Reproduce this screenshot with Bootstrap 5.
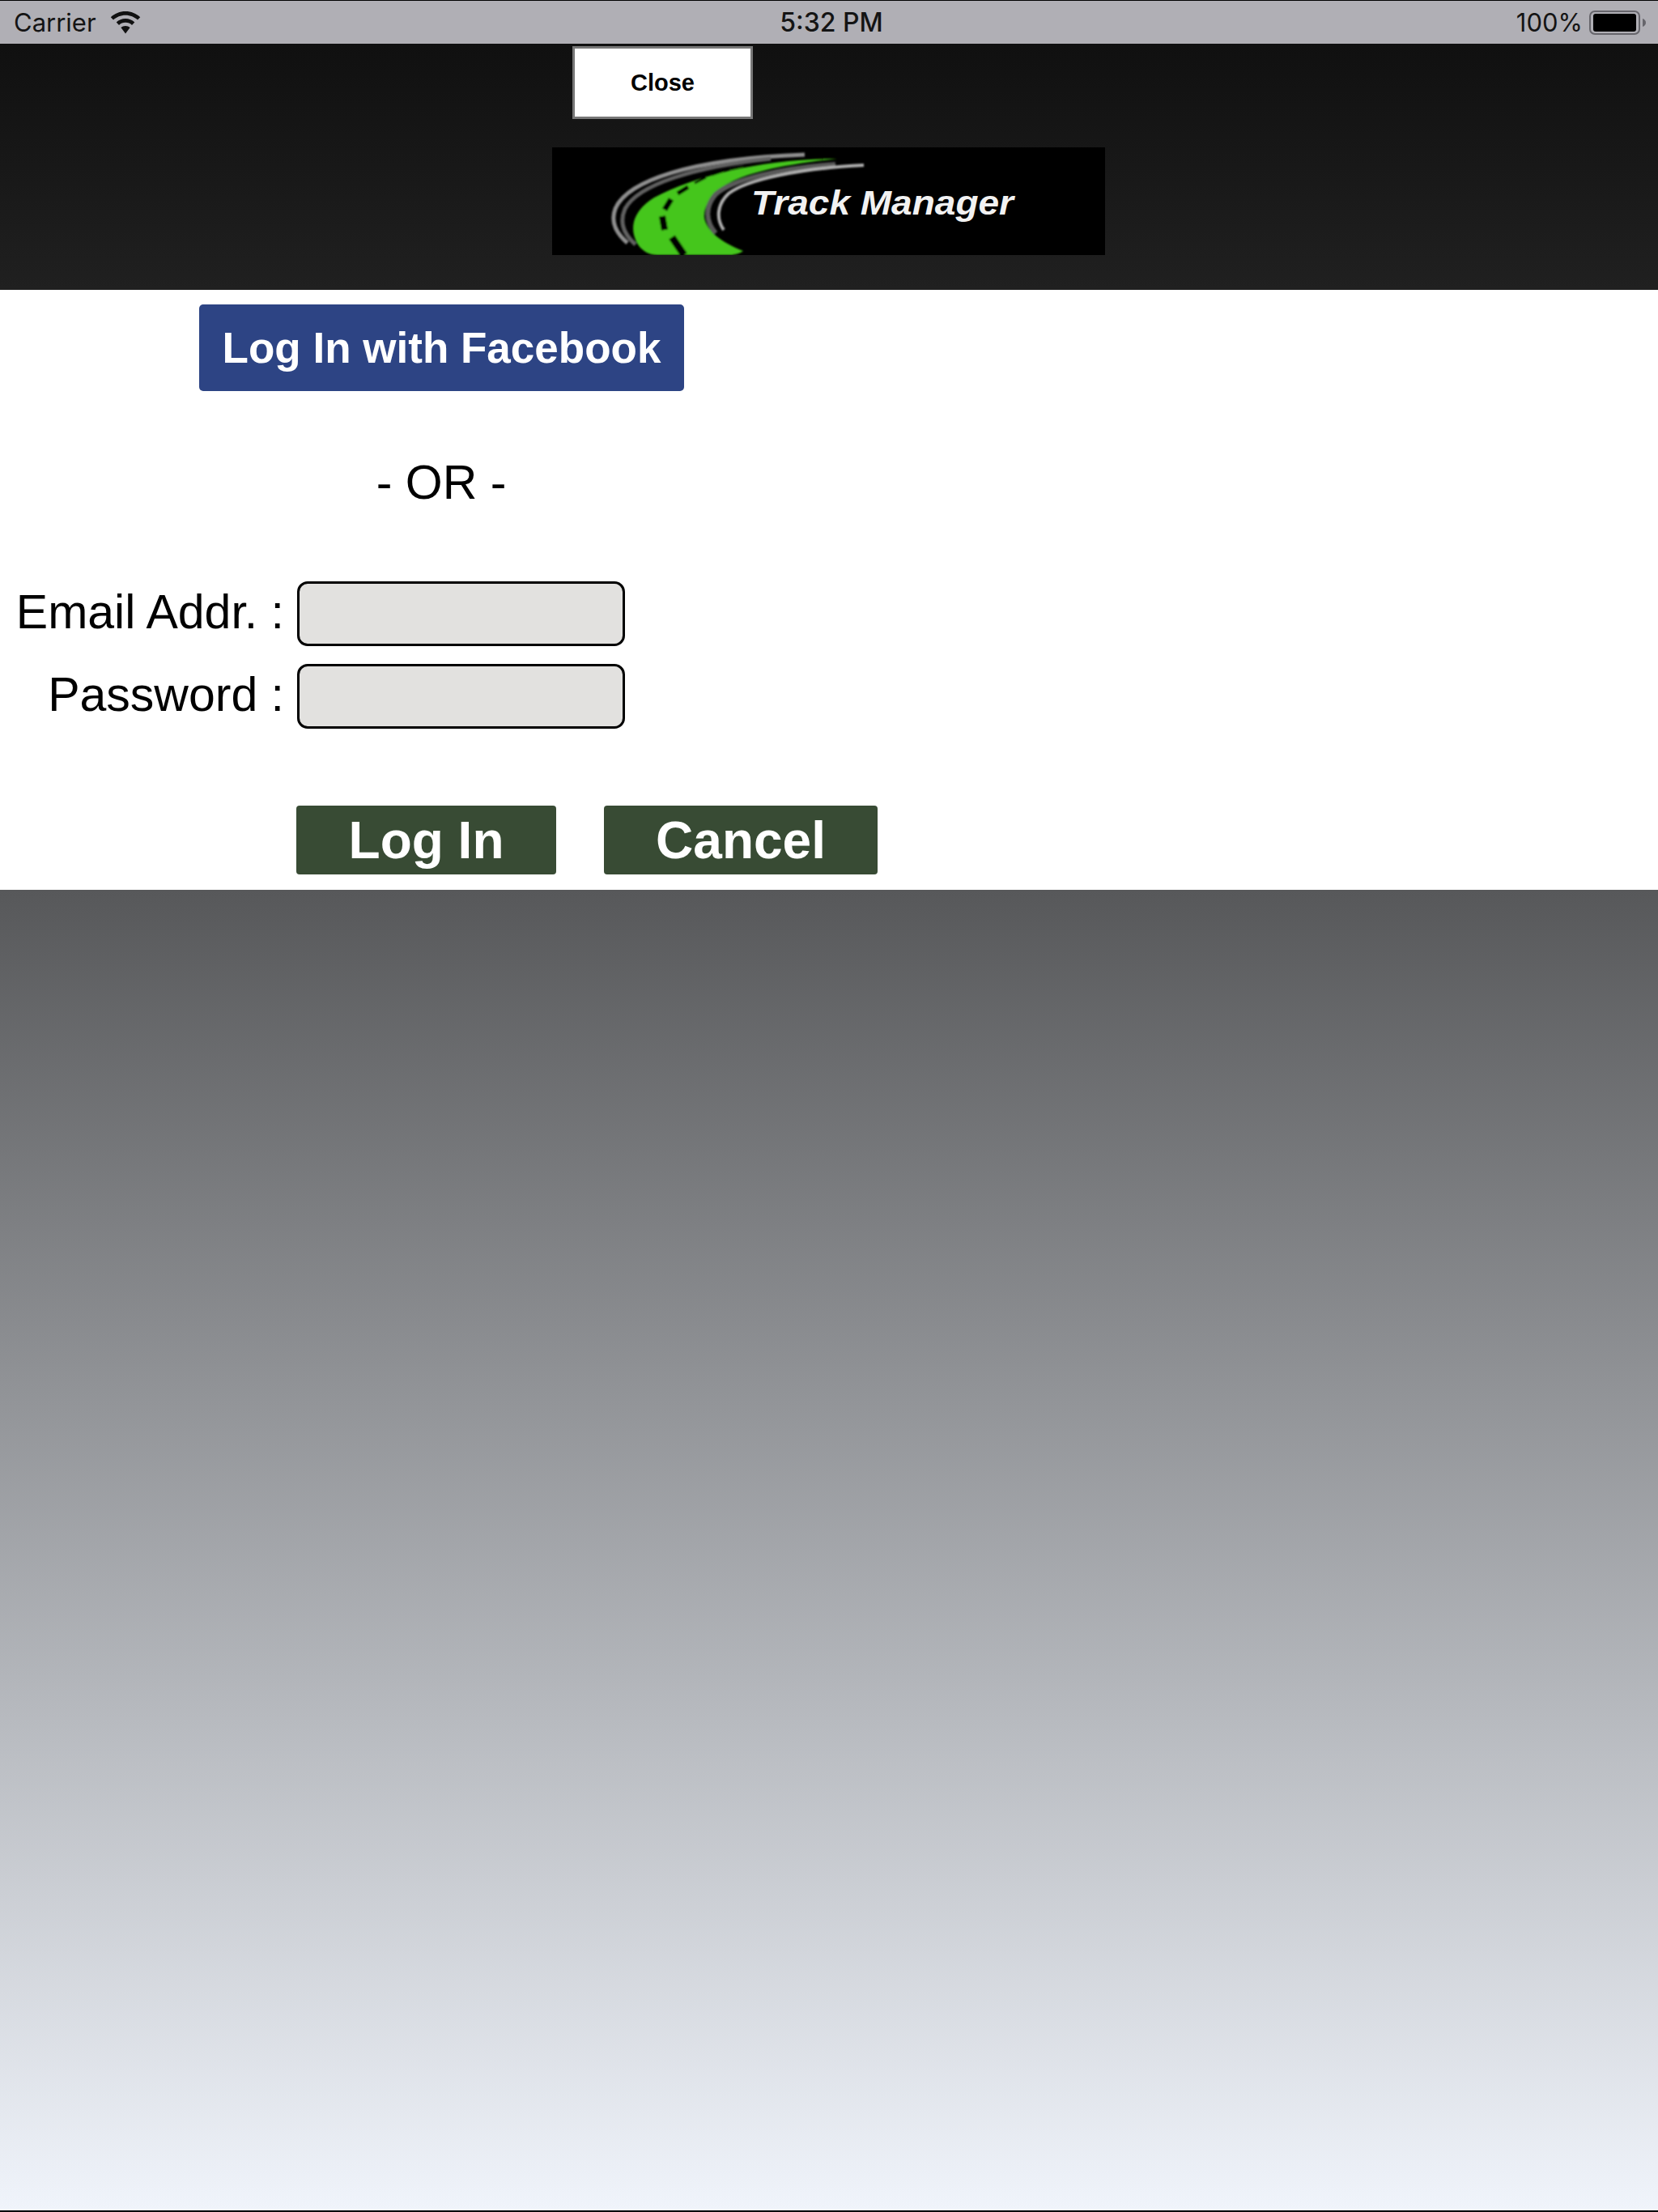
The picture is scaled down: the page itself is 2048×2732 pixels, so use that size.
<!DOCTYPE html>
<html lang="en">
<head>
<meta charset="utf-8">
<title>Track Manager</title>
<link href="https://cdn.jsdelivr.net/npm/bootstrap@5.3.0/dist/css/bootstrap.min.css" rel="stylesheet">
<style>
html,body{margin:0;height:2732px;overflow:hidden;background:#fff;font-family:"Liberation Sans",Arial,sans-serif;color:#000}
.screen-wrap{height:2732px}
.status-strip{height:54px;flex:none;background:#b0afb5;border-top:1px solid #000;padding:0 15px 0 17px;font-family:Inter,"Liberation Sans",sans-serif;font-size:31px;color:#141414;line-height:1}
.status-side{flex:1 1 0}
.status-time{font-weight:500;font-size:32px;padding-left:4px}
.wifi-mark{margin-left:17px}
.battery-mark{margin-left:8px}
.top-band{height:304px;flex:none;background:linear-gradient(#101010,#202020);padding:3px 0 0 682px}
.close-btn{display:block;margin-left:25px;width:223px;height:90px;background:#fff;border:3px solid #777;border-radius:0;padding:0;color:#000;font-size:29px;font-weight:700;line-height:1}
.close-btn:hover{background:#fff;border-color:#777;color:#000}
.logo-box{display:block;width:683px;height:133px;margin-top:35px;background:#000}
.form-panel{height:741px;flex:none;background:#fff;padding-top:18px}
.fb-btn{display:block;margin-left:246px;width:599px;height:107px;background:#2d4484;border:0;border-radius:5px;padding:0;color:#fff;font-size:53px;font-weight:700;line-height:1}
.fb-btn:hover{background:#2d4484;color:#fff}
.or-line{width:598px;margin:80px 0 89px 246px;font-size:59px;line-height:66px;text-align:center}
.field-row{height:80px;margin-bottom:22px}
.field-label{width:351px;padding:0 0 4px;margin:0;text-align:right;font-size:59px;line-height:66px;white-space:nowrap}
.field-input{margin-left:16px;width:405px;height:80px;background:#e2e1df;border:3px solid #000;border-radius:13px;padding:0 12px}
.field-input:focus{background:#e2e1df;border-color:#000;box-shadow:none}
.action-row{margin:95px 0 0 366px;gap:59px}
.act-btn{height:85px;background:#384b34;border:0;border-radius:4px;padding:0;color:#fff;font-size:64px;font-weight:700;line-height:1}
.act-btn:hover{background:#384b34;color:#fff}
.act-login{width:321px}
.act-cancel{width:338px}
.fade-panel{flex:1 1 auto;background:linear-gradient(#57585a,#f0f4fb);border-bottom:2px solid #000}
</style>
</head>
<body>
<div class="screen-wrap d-flex flex-column">
  <div class="status-strip d-flex align-items-center">
    <div class="status-side d-flex align-items-center">
      <span>Carrier</span>
      <svg class="wifi-mark" width="38" height="28" viewBox="0 0 38 28" aria-hidden="true">
        <path d="M19 0C12 0 5.600 2.700 .8 7.200L4 10.600C7.900 7 13.200 4.700 19 4.700S30.100 7 34 10.600L37.200 7.200C32.400 2.700 26 0 19 0Z" fill="#111"/>
        <path d="M19 9C14.700 9 10.700 10.700 7.700 13.400L11 16.900C13.100 15 15.900 13.800 19 13.800S24.900 15 27 16.900L30.300 13.400C27.300 10.700 23.300 9 19 9Z" fill="#111"/>
        <path d="M19 18C16.800 18 14.900 18.800 13.400 20.100L19 27.500L24.600 20.100C23.100 18.800 21.200 18 19 18Z" fill="#111"/>
      </svg>
    </div>
    <div class="status-time">5:32 PM</div>
    <div class="status-side d-flex align-items-center justify-content-end">
      <span>100%</span>
      <svg class="battery-mark" width="70" height="30" viewBox="0 0 70 30" aria-hidden="true">
        <rect x="1" y="1" width="61" height="28" rx="6" fill="none" stroke="#66656b" stroke-width="2"/>
        <rect x="5" y="4" width="53" height="22" rx="3" fill="#000"/>
        <path d="M66 10C68.500 11 70 12.500 70 15S68.500 19 66 20Z" fill="#66656b"/>
      </svg>
    </div>
  </div>

  <div class="top-band">
    <button type="button" class="btn close-btn">Close</button>
    <svg class="logo-box" viewBox="0 0 683 133" role="img" aria-label="Track Manager logo">
      <defs>
        <filter id="soft" x="-5%" y="-5%" width="110%" height="110%"><feGaussianBlur stdDeviation="0.8"/></filter>
      </defs>
      <g filter="url(#soft)">
        <path d="M93 118C79 106 72 92 78 76C92 42 170 14 312 9" fill="none" stroke="#8f8f8f" stroke-width="5"/>
        <path d="M103 120C87 106 83 92 90 76C106 46 175 24 270 14" fill="none" stroke="#606060" stroke-width="5"/>
        <path d="M352 14C262 14 178 34 126 62C100 78 94 100 106 120C112 129 121 133 130 133L222 133C229 132 233 130 236 128C210 118 190 103 188 86C187 72 198 56 215 46C238 32 285 21 352 14Z" fill="#45c61c"/>
        <path d="M163 133L148 111" fill="none" stroke="#000" stroke-width="9"/>
        <path d="M139 102L136 85" fill="none" stroke="#000" stroke-width="8"/>
        <path d="M139 77L147 64" fill="none" stroke="#000" stroke-width="7"/>
        <path d="M155 57L168 49" fill="none" stroke="#000" stroke-width="5"/>
        <path d="M176 44L190 37" fill="none" stroke="#000" stroke-width="3"/>
        <path d="M197 34L212 29" fill="none" stroke="#000" stroke-width="2.500"/>
        <path d="M219 27L236 23" fill="none" stroke="#000" stroke-width="2"/>
        <path d="M202 106C190 92 188 74 202 58C222 40 280 26 350 21" fill="none" stroke="#5a5a5a" stroke-width="6"/>
        <path d="M212 102C202 88 204 70 218 57C240 40 305 26 385 22" fill="none" stroke="#b0b0b0" stroke-width="4"/>
      </g>
      <text x="246" y="83" textLength="324" lengthAdjust="spacingAndGlyphs" fill="#f2f2f2" font-family="Liberation Sans, Arial, sans-serif" font-size="42" font-weight="700" font-style="italic">Track Manager</text>
    </svg>
  </div>

  <form class="form-panel">
    <button type="button" class="btn fb-btn">Log In with Facebook</button>
    <div class="or-line">- OR -</div>
    <div class="field-row d-flex align-items-center">
      <label class="field-label" for="mail">Email Addr. :</label>
      <input id="mail" type="text" class="form-control field-input">
    </div>
    <div class="field-row d-flex align-items-center">
      <label class="field-label" for="pass">Password :</label>
      <input id="pass" type="password" class="form-control field-input">
    </div>
    <div class="action-row d-flex">
      <button type="button" class="btn act-btn act-login">Log In</button>
      <button type="button" class="btn act-btn act-cancel">Cancel</button>
    </div>
  </form>

  <div class="fade-panel"></div>
</div>
<script src="https://cdn.jsdelivr.net/npm/bootstrap@5.3.0/dist/js/bootstrap.bundle.min.js"></script>
</body>
</html>
